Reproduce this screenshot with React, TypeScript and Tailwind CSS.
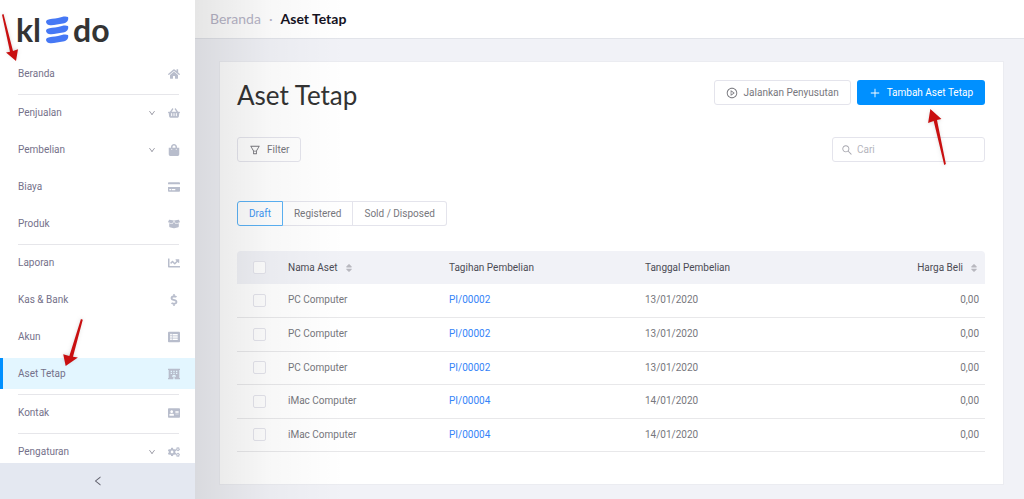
import type { ReactNode } from "react";

import clsx from "clsx";
import {
  AiOutlineDown,
  AiOutlineFilter,
  AiOutlineLeft,
  AiOutlinePlayCircle,
  AiOutlinePlus,
  AiOutlineSearch,
} from "react-icons/ai";
import {
  FaAddressCard,
  FaBoxOpen,
  FaChartLine,
  FaCogs,
  FaCreditCard,
  FaDollarSign,
  FaHome,
  FaHotel,
  FaListAlt,
  FaShoppingBag,
  FaShoppingBasket,
  FaSort,
} from "react-icons/fa";

interface MenuItem {
  active?: boolean;
  expandable?: boolean;
  icon: ReactNode;
  label: string;
}

const menuGroups: MenuItem[][] = [
  [{ icon: <FaHome />, label: "Beranda" }],
  [
    { expandable: true, icon: <FaShoppingBasket />, label: "Penjualan" },
    { expandable: true, icon: <FaShoppingBag />, label: "Pembelian" },
    { icon: <FaCreditCard />, label: "Biaya" },
    { icon: <FaBoxOpen />, label: "Produk" },
  ],
  [
    { icon: <FaChartLine />, label: "Laporan" },
    { icon: <FaDollarSign />, label: "Kas & Bank" },
    { icon: <FaListAlt />, label: "Akun" },
    { active: true, icon: <FaHotel />, label: "Aset Tetap" },
  ],
  [{ icon: <FaAddressCard />, label: "Kontak" }],
  [{ expandable: true, icon: <FaCogs />, label: "Pengaturan" }],
];

const assets = [
  { bill: "PI/00002", date: "13/01/2020", id: 1, name: "PC Computer", price: "0,00" },
  { bill: "PI/00002", date: "13/01/2020", id: 2, name: "PC Computer", price: "0,00" },
  { bill: "PI/00002", date: "13/01/2020", id: 3, name: "PC Computer", price: "0,00" },
  { bill: "PI/00004", date: "14/01/2020", id: 4, name: "iMac Computer", price: "0,00" },
  { bill: "PI/00004", date: "14/01/2020", id: 5, name: "iMac Computer", price: "0,00" },
];

const tabs = ["Draft", "Registered", "Sold / Disposed"];

const Logo = () => (
  <a
    aria-label="kledo"
    className="flex h-14 items-center pt-1 pl-4 font-[Lato,sans-serif] text-[32px] leading-none font-bold text-[#343434]"
    href="#"
  >
    kl
    <svg className="mx-1 h-7 w-6" fill="#4678f5" viewBox="0 0 24 28">
      {[0, 9, 18].map((y) => (
        <path
          d="M2 4C5 2.500 9 3 13 2c4-1.500 8-2 10-1 1 3-1 6-5 6.500C13 8 8 9.800 4 9 1.500 8.500 0 5.500 2 4Z"
          key={y}
          transform={`translate(0 ${y})`}
        />
      ))}
    </svg>
    do
  </a>
);

const MenuLink = ({ active, expandable, icon, label }: MenuItem) => (
  <a
    className={clsx(
      "mt-0.5 mb-1 flex h-[31px] items-center border-l-[3px] pr-[15px] pl-[15px]",
      active ? "border-[#0090ff] bg-[#e3f6ff]" : "border-transparent"
    )}
    href="#"
  >
    <span className="flex-1 text-[#75718a]">{label}</span>
    {expandable && <AiOutlineDown className="mr-3 size-2 text-[#8a8a96]" />}
    <span className="flex min-w-3 justify-end text-xs text-[#b8bdcc]">{icon}</span>
  </a>
);

const Sidebar = () => (
  <aside className="relative z-20 flex w-[195px] shrink-0 flex-col bg-white">
    <Logo />
    <nav className="min-h-0 flex-1 overflow-hidden">
      {menuGroups.map((group, i) => (
        <div className="flex flex-col" key={i}>
          {i > 0 && <div className="mt-px mr-4 ml-[18px] h-px bg-[#e6e6ea]" />}
          {group.map((item) => (
            <MenuLink key={item.label} {...item} />
          ))}
        </div>
      ))}
    </nav>
    <button
      aria-label="Collapse"
      className="flex h-9 shrink-0 items-center justify-center bg-[#e4e8f1] text-[#62626e]"
    >
      <AiOutlineLeft className="size-3" />
    </button>
  </aside>
);

const Check = ({ label }: { label: string }) => (
  <input
    aria-label={label}
    className="mx-auto block size-[13px] appearance-none rounded-xs border border-[#e4e4ec] bg-white"
    type="checkbox"
  />
);

const AssetTable = () => (
  <table className="mt-[25px] w-full table-fixed text-left">
    <thead className="bg-[#f1f2f7] text-[#4c4c55]">
      <tr className="h-[33px]">
        <th className="w-[45px] rounded-tl">
          <Check label="Pilih semua" />
        </th>
        <th className="w-[161px] px-1.5 font-normal">
          <span className="flex items-center gap-1.5">
            Nama Aset <FaSort className="size-2.5 text-[#b8b8bf]" />
          </span>
        </th>
        <th className="w-[196px] px-1.5 font-normal">Tagihan Pembelian</th>
        <th className="px-1.5 font-normal">Tanggal Pembelian</th>
        <th className="rounded-tr px-1.5 font-normal">
          <span className="flex items-center justify-end gap-1.5">
            Harga Beli <FaSort className="size-2.5 text-[#b8b8bf]" />
          </span>
        </th>
      </tr>
    </thead>
    <tbody>
      {assets.map(({ bill, date, id, name, price }) => (
        <tr className="h-[33px] border-b border-[#e8e8ea] even:h-[34px]" key={id}>
          <td>
            <Check label={`Pilih ${name}`} />
          </td>
          <td className="px-1.5">{name}</td>
          <td className="px-1.5">
            <a className="text-[#3584f8]" href="#">
              {bill}
            </a>
          </td>
          <td className="px-1.5">{date}</td>
          <td className="px-1.5 text-right">{price}</td>
        </tr>
      ))}
    </tbody>
  </table>
);

const Arrow = ({ className }: { className: string }) => (
  <svg
    className={clsx("pointer-events-none absolute z-30 drop-shadow", className)}
    preserveAspectRatio="none"
    viewBox="0 0 18 56"
  >
    <path d="M15.500 56 6 12 1 14 3 0l10 10-4 1 8 44Z" fill="#c90f10" />
  </svg>
);

export default function App() {
  return (
    <div className="relative flex h-screen overflow-hidden bg-[#f1f2f7] font-[Roboto,sans-serif] text-[10px] leading-4 text-[#77777d]">
      <Sidebar />

      <main className="relative min-w-0 flex-1">
        <header className="flex h-[39px] items-center gap-2 border-b border-[#e2e4ea] bg-white px-[15px] font-[Lato,sans-serif] text-sm">
          <a className="text-[#b7b5c7]" href="#">
            Beranda
          </a>
          <span className="text-[#b7b5c7]">·</span>
          <span className="font-bold text-[#15131f]">Aset Tetap</span>
        </header>

        <section className="mt-[22px] mr-5 ml-6 border border-[#ebecf1] bg-white pt-[18px] pr-[18px] pb-8 pl-[17px]">
          <div className="flex items-start justify-between">
            <h1 className="font-[Lato,sans-serif] text-[26px] leading-[30px] text-[#333]">
              Aset Tetap
            </h1>
            <div className="flex gap-1.5">
              <button className="flex h-[25px] items-center gap-1.5 rounded-[3px] border border-[#e4e4ec] px-[11px]">
                <AiOutlinePlayCircle className="size-3" />
                Jalankan Penyusutan
              </button>
              <button className="flex h-[25px] items-center gap-1.5 rounded-[3px] bg-[#0090ff] px-3 text-white">
                <AiOutlinePlus className="size-3" />
                Tambah Aset Tetap
              </button>
            </div>
          </div>

          <div className="mt-[27px] flex items-center justify-between">
            <button className="flex h-[25px] items-center gap-1.5 rounded-[3px] border border-[#e4e4ec] px-[11px]">
              <AiOutlineFilter className="size-3" />
              Filter
            </button>
            <label className="flex h-[25px] w-[153px] items-center gap-1 rounded-[3px] border border-[#e4e4ec] px-2">
              <AiOutlineSearch className="size-3 shrink-0 text-[#a6a6ae]" />
              <input
                aria-label="Cari"
                className="w-full min-w-0 outline-none placeholder:text-[#b5b5bd]"
                placeholder="Cari"
                type="search"
              />
            </label>
          </div>

          <div className="mt-[39px] flex">
            {tabs.map((tab, i) => (
              <button
                className={clsx(
                  "h-[25px] border px-[11px] first:rounded-l-[3px] last:rounded-r-[3px]",
                  i === 0 ? "border-[#5bb2f5] text-[#3e97f5]" : "border-l-0 border-[#e4e4ec]"
                )}
                key={tab}
              >
                {tab}
              </button>
            ))}
          </div>

          <AssetTable />
        </section>

        {/* Soft shadow cast by the sidebar */}
        <div className="pointer-events-none absolute inset-y-0 left-0 w-[150px] bg-linear-to-r from-black/10 via-black/3 to-transparent" />
      </main>

      <Arrow className="top-[109px] left-[927px] h-14 w-5" />
      <Arrow className="top-[14px] left-px h-[47px] w-[18px] rotate-180" />
      <Arrow className="top-[319px] left-[62px] h-[47px] w-[22px] -scale-y-100" />
    </div>
  );
}
